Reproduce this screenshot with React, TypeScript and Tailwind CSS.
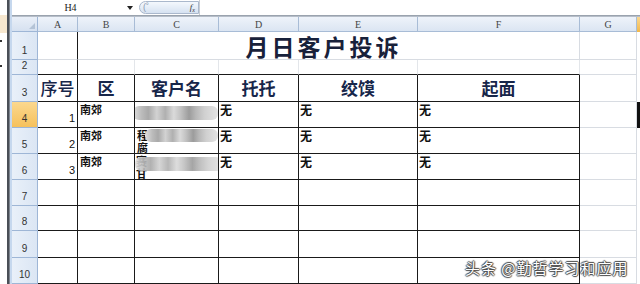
import React from "react";

const COLS = ["A", "B", "C", "D", "E", "F", "G"];
const ROW_H = [28, 15, 27, 26, 26, 26, 26, 25, 27, 26];

const sans = { fontFamily: '"Liberation Sans", "Noto Sans CJK SC", sans-serif' };
const cjk = { fontFamily: '"Noto Sans CJK SC", sans-serif' };

function Blur({ className }: { className: string }) {
  return (
    <div
      className={`absolute rounded-[6px] blur-[0.6px] bg-[linear-gradient(90deg,#e0e0e0_0%,#bcbcbc_10%,#a9a9a9_18%,#d2d2d2_28%,#b0b0b0_38%,#dadada_48%,#c2c2c2_56%,#9c9c9c_66%,#b8b8b8_74%,#d0d0d0_84%,#e4e4e4_100%)] ${className}`}
    />
  );
}

export default function App() {
  const grid = "border-r border-b border-[#d8dce2]";
  const blk = "border-r border-b border-[#1a1a1a]";

  const rowHeader = (n: number) => (
    <div
      key={`rh${n}`}
      className={`flex items-end justify-center pb-[1px] text-[10px] text-[#333] border-b border-r border-[#9eb6d6] ${
        n === 4 ? "bg-[linear-gradient(180deg,#fbd88f,#f6c15c)]" : "bg-[linear-gradient(90deg,#e9f0f9,#dbe6f4)]"
      }`}
      style={sans}
    >
      {n}
    </div>
  );

  return (
    <div className="w-[640px] h-[284px] overflow-hidden bg-white flex relative select-none" style={sans}>
      {/* left window edge */}
      <div className="w-[7px] flex flex-col">
        <div className="h-[15px] bg-white" />
        <div className="h-[18px] bg-[#f6e7cf]" />
        <div className="flex-1 bg-white relative">
          <div className="absolute left-0 top-[7px] w-[2px] h-[2px] bg-[#333]" />
          <div className="absolute left-0 top-[32px] w-[2px] h-[2px] bg-[#333]" />
        </div>
      </div>
      <div className="w-[3px] border-l-2 border-[#4a4f57] bg-[#7e858f]" />
      <div className="w-[2px] bg-[#c6d8ee]" />

      <div className="flex-1 flex flex-col">
        {/* formula bar */}
        <div className="h-[15px] flex items-center bg-white">
          <div className="w-[115px] text-center text-[10px] text-[#222] pl-[2px]" style={{ fontFamily: '"Liberation Serif", serif' }}>
            H4
          </div>
          <div className="w-0 h-0 border-l-[3px] border-r-[3px] border-t-[4px] border-l-transparent border-r-transparent border-t-[#222]" />
          <div className="ml-[6px] w-[60px] h-[13px] rounded-l-full border border-[#aab8cc] bg-[linear-gradient(180deg,#f4f8fd,#d6e2f1)] flex items-center justify-between px-[3px]">
            <span className="text-[9px] text-[#8a9ab0] leading-none">(˚</span>
            <span className="text-[9px] italic text-[#333] leading-none" style={{ fontFamily: '"Liberation Serif", serif' }}>
              f<sub className="text-[6px]">x</sub>
            </span>
          </div>
          <div className="flex-1 h-full border-l border-[#c8cdd4]" />
        </div>
        <div className="h-[3px] border-t border-[#9aa3ae] bg-[#e7ebf0] border-b border-b-[#b6bec9]" />

        {/* sheet */}
        <div
          className="grid grid-cols-[26px_40px_57px_84px_80px_119px_162px_57px_3px]"
          style={{ gridTemplateRows: `15px ${ROW_H.map((h) => `${h}px`).join(" ")}` }}
        >
          {/* column header row */}
          <div className="relative border-r border-b border-[#9eb6d6] bg-[linear-gradient(180deg,#e9eff8,#d6e1f0)]">
            <div className="absolute right-[2px] bottom-[2px] w-0 h-0 border-l-[6px] border-t-[6px] border-l-transparent border-t-transparent border-b-0 border-r-[6px] border-r-[#b4c3d6]" />
          </div>
          {COLS.map((c) => (
            <div
              key={c}
              className="flex items-center justify-center text-[10px] text-[#444] border-r border-b border-[#a8bcd6] bg-[linear-gradient(180deg,#eef3fa,#dbe5f2)]"
              style={{ fontFamily: '"Liberation Serif", serif' }}
            >
              {c}
            </div>
          ))}
          <div className="bg-[linear-gradient(180deg,#fbd88f,#f3b84a)]" />

          {/* row 1 */}
          {rowHeader(1)}
          <div className="border-r border-[#1a1a1a] border-b border-b-[#d8dce2]" />
          <div
            className="col-span-5 flex items-center justify-center border-r border-b border-[#d8dce2] text-[23px] font-bold text-[#18213a] tracking-[3px] pt-[1px] pr-[10px]"
            style={cjk}
          >
            月日客户投诉
          </div>
          <div className={grid} />
          <div className="bg-white" />

          {/* row 2 */}
          {rowHeader(2)}
          <div className="border-r border-[#1a1a1a] border-b border-b-[#1a1a1a]" />
          {[0, 1, 2, 3, 4].map((i) => (
            <div key={`r2${i}`} className="border-b border-[#1a1a1a] border-r border-r-[#e3e6ea]" />
          ))}
          <div className={grid} />
          <div className="bg-white" />

          {/* row 3 headers */}
          {["序号", "区", "客户名", "托托", "绞馍", "起面"].map((t, i) => (
            <React.Fragment key={`h${i}`}>
              {i === 0 && rowHeader(3)}
              <div
                className={`${blk} flex items-center justify-center text-[#17264a] text-[17px] ${i === 0 ? "font-medium" : "font-bold"}`}
                style={cjk}
              >
                {t}
              </div>
            </React.Fragment>
          ))}
          <div className={grid} />
          <div className="bg-white" />

          {/* data rows */}
          {[1, 2, 3].map((n) => (
            <React.Fragment key={`d${n}`}>
              {rowHeader(n + 3)}
              <div className={`${blk} flex items-end justify-end pr-[2px] pb-[1px] text-[11px] text-[#111]`}>{n}</div>
              <div className={`${blk} pl-[2px] text-[11px] font-bold text-[#111] leading-[14px]`} style={cjk}>
                南郊
              </div>
              <div className={`${blk} relative overflow-hidden text-[11px] font-bold text-[#111]`} style={cjk}>
                {n === 2 && (
                  <div className="absolute left-[2px] top-[1px] leading-[12px]">
                    <div>程</div>
                    <div>腐</div>
                  </div>
                )}
                {n === 3 && (
                  <div className="absolute left-[1px] top-[1px] leading-[12px]">
                    <div>赛</div>
                    <div>甘</div>
                  </div>
                )}
                {n === 1 && <Blur className="left-[-2px] top-[4px] w-[85px] h-[14px]" />}
                {n === 2 && <Blur className="left-[10px] top-[1px] w-[73px] h-[13px]" />}
                {n === 3 && <Blur className="left-[0px] top-[3px] w-[87px] h-[14px] opacity-90" />}
              </div>
              {[0, 1, 2].map((i) => (
                <div key={`w${i}`} className={`${blk} pl-[1px] text-[12px] font-bold text-[#111] leading-[15px]`} style={cjk}>
                  无
                </div>
              ))}
              <div className={grid} />
              <div className={n === 1 ? "bg-white border-l-[3px] border-[#111] border-t-2 border-b-2" : "bg-white"} />
            </React.Fragment>
          ))}

          {/* empty rows */}
          {[7, 8, 9, 10].map((n) => (
            <React.Fragment key={`e${n}`}>
              {rowHeader(n)}
              {[0, 1, 2, 3, 4, 5].map((i) => (
                <div key={`c${i}`} className={blk} />
              ))}
              <div className={grid} />
              <div className="bg-white" />
            </React.Fragment>
          ))}
        </div>
      </div>

      {/* watermark */}
      <div
        className="absolute left-[465px] top-[257px] text-[15px] text-white tracking-[1px]"
        style={{
          ...cjk,
          textShadow: "1px 0 1px #444, -1px 0 1px #444, 0 1px 1px #444, 0 -1px 1px #444",
        }}
      >
        头条 @勤哲学习和应用
      </div>
    </div>
  );
}
